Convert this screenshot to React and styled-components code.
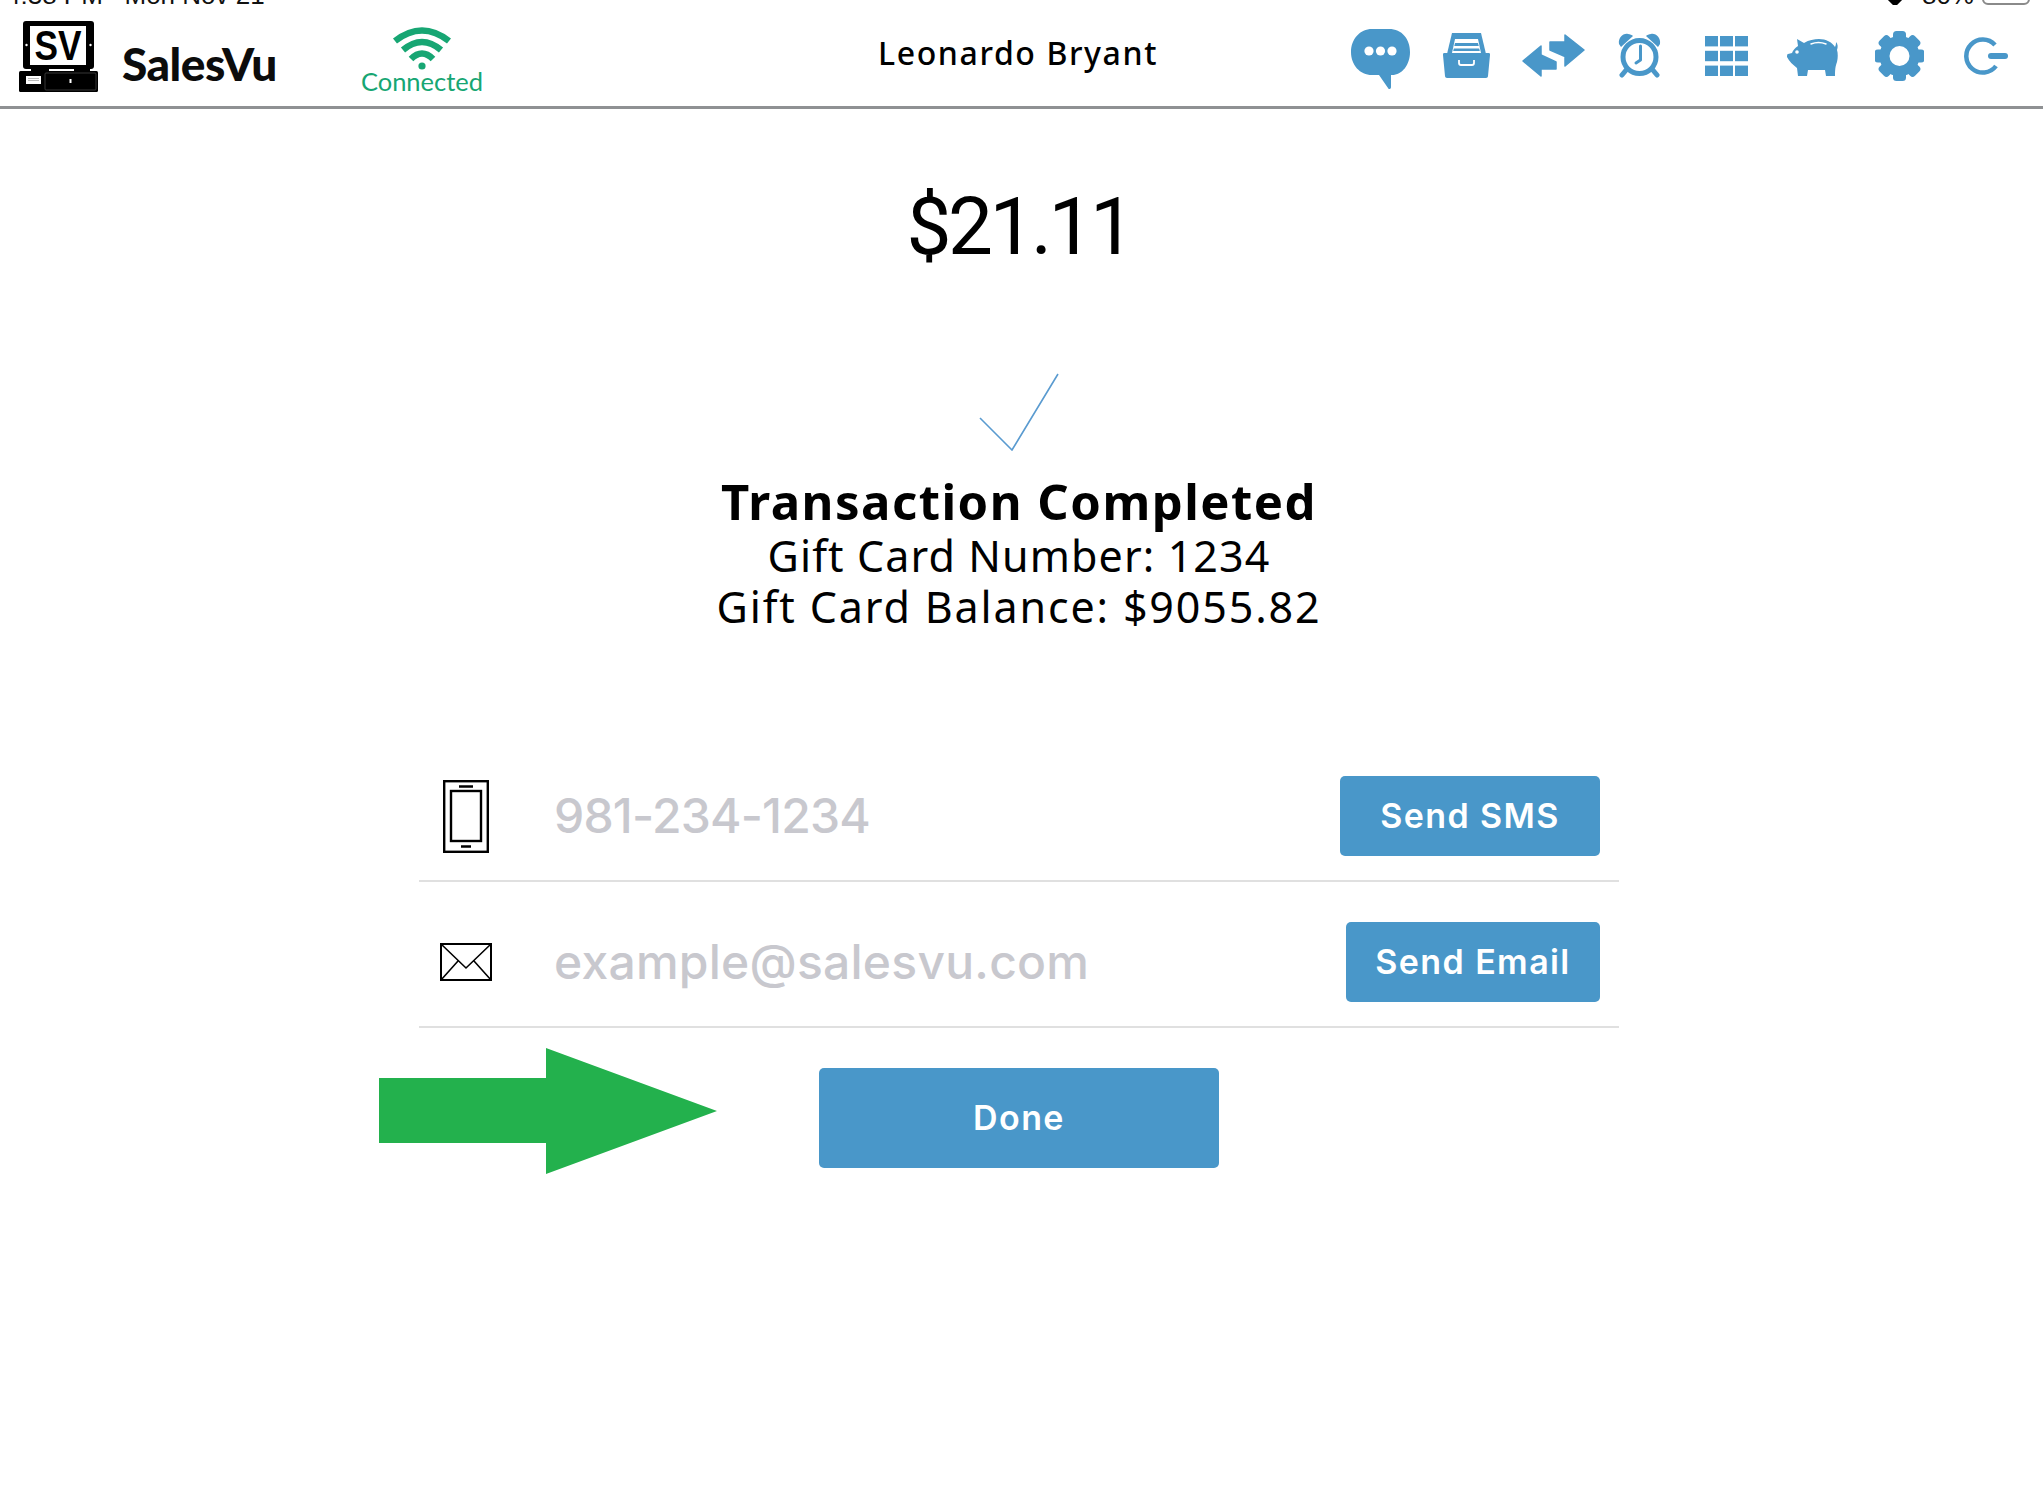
import React from "react";
import styled, { createGlobalStyle } from "styled-components";

const Global = createGlobalStyle`
  html, body { margin: 0; padding: 0; background: #fff; }
  * { box-sizing: border-box; }
  body { font-family: "Noto Sans", "Liberation Sans", sans-serif; color: #000; overflow: hidden; }
`;
const BLUE = "#4997c9";

const Page = styled.div`
  width: 2043px;
  min-height: 1511px;
  display: flex;
  flex-direction: column;
`;
const StatusBar = styled.div`
  height: 5px;
  overflow: hidden;
  display: flex;
  justify-content: space-between;
  padding: 0 13px 0 6px;
  font: 400 26px/28px "Liberation Sans", sans-serif;
  color: #111;
`;
const StatusText = styled.span`
  margin-top: -19px;
  white-space: pre;
`;
const StatusRight = styled.div`
  display: flex;
  align-items: flex-start;
  gap: 8px;
`;
const Battery = styled.div`
  width: 48px;
  height: 24px;
  margin-top: -19px;
  border: 2px solid #8a8a8a;
  border-radius: 6px;
  padding: 3px;
`;
const BatteryFill = styled.div`
  width: 12px;
  height: 100%;
  background: #000;
`;
const LocationDot = styled.span`
  width: 10px;
  height: 10px;
  margin: -5px 14px 0 0;
  background: #000;
  transform: rotate(45deg);
`;
const Header = styled.header`
  height: 104px;
  border-bottom: 3px solid #8f9193;
  display: grid;
  grid-template-columns: 1fr auto 1fr;
  align-items: center;
  padding-right: 14px;
`;
const Brand = styled.div`
  display: flex;
  align-items: center;
  padding-left: 19px;
`;
const BrandName = styled.span`
  font: 900 46px/50px "Lato", sans-serif;
  letter-spacing: -0.5px;
  margin: 16px 0 0 24px;
  color: #0c0c0c;
`;
const Connection = styled.div`
  display: flex;
  flex-direction: column;
  align-items: center;
  margin: 10px 0 0 84px;
`;
const ConnectedLabel = styled.span`
  font: 400 25.5px/26px "Lato", sans-serif;
  color: #17a673;
  margin-top: -2px;
`;
const UserName = styled.div`
  font: 500 32px/40px "Noto Sans", sans-serif;
  letter-spacing: 1.6px;
  margin: 0 0 6px 7px;
`;
const Nav = styled.nav`
  display: flex;
  justify-content: flex-end;
`;
const NavSlot = styled.div`
  width: 86.5px;
  height: 90px;
  display: flex;
  align-items: center;
  justify-content: center;
`;
const Main = styled.main`
  width: 2038px;
  display: flex;
  flex-direction: column;
  align-items: center;
`;
const Amount = styled.div`
  margin-top: 73px;
  font: 400 80px/90px "Roboto", sans-serif;
  letter-spacing: -3.5px;
`;
const CheckMark = styled.svg`
  display: block;
  margin-top: 101px;
  width: 80px;
  height: 78px;
`;
const Title = styled.h1`
  margin: 22px 0 0;
  font: 700 49px/57px "Noto Sans", sans-serif;
  letter-spacing: 1.5px;
`;
const InfoLine = styled.div`
  font: 400 43px/51px "Noto Sans", sans-serif;
  letter-spacing: ${(p) => p.$track}px;
`;
const Form = styled.div`
  width: 1200px;
  margin-top: 104px;
`;
const Row = styled.div`
  display: flex;
  align-items: center;
  height: 146px;
  padding: 40px 19px 24px 0;
  border-bottom: 2px solid #e0e0e0;
`;
const RowIcon = styled.div`
  width: 94px;
  margin-right: 41px;
  display: flex;
  justify-content: center;
`;
const FieldText = styled.span`
  flex: 1;
  font: 500 48px/56px "Inter", sans-serif;
  letter-spacing: ${(p) => p.$track}px;
  color: #c8c8ce;
`;
const ActionButton = styled.button`
  width: ${(p) => p.$w}px;
  height: 80px;
  border: 0;
  border-radius: 5px;
  background: ${BLUE};
  color: #fff;
  font: 600 34px/40px "Inter", sans-serif;
  letter-spacing: 1.4px;
  padding: 0;
`;
const DoneRow = styled.div`
  position: relative;
  width: 1200px;
  margin-top: 40px;
  display: flex;
  justify-content: center;
`;
const DoneButton = styled(ActionButton)`
  width: 400px;
  height: 100px;
`;
const PointerArrow = styled.svg`
  position: absolute;
  left: -40px;
  top: -20px;
`;

const Logo = () => (
  <svg width="79" height="72" viewBox="0 0 79 72">
    <rect x="4" y="1" width="71" height="48" rx="3" fill="#000" />
    <rect x="11" y="6" width="56" height="39" fill="#fff" />
    <circle cx="7.5" cy="25" r="1.2" fill="#fff" />
    <circle cx="71.5" cy="25" r="1.2" fill="#fff" />
    <text x="39" y="40" textAnchor="middle" textLength="47" lengthAdjust="spacingAndGlyphs" fontFamily="Liberation Sans" fontWeight="700" fontSize="42" fill="#000">SV</text>
    <rect x="12" y="48" width="18" height="4" fill="#000" />
    <rect x="55" y="48" width="16" height="4" fill="#000" />
    <rect x="0" y="51" width="79" height="21" rx="1.5" fill="#000" />
    <rect x="26" y="53" width="51" height="17" rx="1" fill="none" stroke="#444" strokeWidth="0.8" />
    <rect x="7" y="56" width="15" height="8" fill="#fff" />
    <path d="M9 58.5h11M9 60.5h11" stroke="#aaa" strokeWidth="0.8" />
    <rect x="50.5" y="59" width="2" height="4" fill="#fff" />
  </svg>
);
const Wifi = () => (
  <svg width="60" height="43" viewBox="0 0 60 43" fill="none" stroke="#17a673" strokeWidth="6.5">
    <path d="M3 14 Q30 -7 57 14" />
    <path d="M11 23 Q30 7 49 23" />
    <path d="M19 32 Q30 21 41 32" />
    <circle cx="30" cy="39" r="3.6" fill="#17a673" stroke="none" />
  </svg>
);
const ChatIcon = () => (
  <svg width="59" height="66" viewBox="0 -6 59 66">
    <path d="M21 0h17c13 0 21 10 21 23s-8 23-18 23h-1v12c0 2-2 3-3 1l-9-13H21C9 46 0 36 0 23S9 0 21 0z" fill={BLUE} />
    <circle cx="18" cy="22" r="4.6" fill="#fff" />
    <circle cx="29.5" cy="22" r="4.6" fill="#fff" />
    <circle cx="41" cy="22" r="4.6" fill="#fff" />
  </svg>
);
const DrawerIcon = () => (
  <svg width="47" height="45" viewBox="0 0 47 45">
    <path d="M9 0h29l5 21H4z" fill={BLUE} />
    <path d="M12 6h23l3 14H9z" fill="#fff" />
    <path d="M12 10h23l.8 3H11.3zM10.8 15.5h25.4l.6 2.5H10.2z" fill={BLUE} />
    <path d="M1 20h45c1 0 1 1 1 2l-2 21c0 1-1 2-2 2H4c-1 0-2-1-2-2L0 22c0-1 0-2 1-2z" fill={BLUE} />
    <path d="M16 27v3c0 1 1 2 2 2h11c1 0 2-1 2-2v-3" fill="none" stroke="#fff" strokeWidth="1.8" />
  </svg>
);
const SwapIcon = () => (
  <svg width="63" height="43" viewBox="0 0 63 43" fill={BLUE} stroke={BLUE} strokeWidth="1.5" strokeLinejoin="round">
    <path d="M28 8h15V1l19 15-19 16v-9.5L28 16z" />
    <path d="M1 27l18-15v9l15 7v7H19v7z" />
  </svg>
);
const ClockIcon = () => (
  <svg width="43" height="45" viewBox="0 0 43 45" fill="none">
    <path d="M1 11C0 5 5 0 10 1c2 0 4 1 5 2L3 14z" fill={BLUE} />
    <path d="M42 11c1-6-4-11-9-10-2 0-4 1-5 2l12 11z" fill={BLUE} />
    <circle cx="21.5" cy="24" r="16.5" stroke={BLUE} strokeWidth="5" />
    <path d="M22.5 13v14l-4.500 3" stroke={BLUE} strokeWidth="3" strokeLinecap="round" strokeLinejoin="round" />
    <path d="M9 36l-5 6M34 36l5 6" stroke={BLUE} strokeWidth="5" strokeLinecap="round" />
  </svg>
);
const GridIcon = () => (
  <svg width="43" height="40" viewBox="0 0 43 40" fill={BLUE}>
    {[0, 14.8, 29.6].flatMap((y) =>
      [0, 15, 30].map((x) => <rect key={`${x}-${y}`} x={x} y={y} width="13" height="10.400" />)
    )}
  </svg>
);
const PiggyIcon = () => (
  <svg width="52" height="40" viewBox="0 0 52 40">
    <path d="M10 3l7 4c5-3 10-4 15-4 7 0 13 3 16 8 1-2 1-4 1-5 2 2 2 5 1 8 1 3 1 8 0 12-1 3-2 5-2 14h-9l-1-6H21l-1 6h-9l-1-8C6 29 2 25 0 21c0-1 0-3 1-3l4-1c1-3 3-5 6-7z" fill={BLUE} />
    <circle cx="10" cy="16" r="1.800" fill="#fff" />
    <path d="M24 8c5-2 10-2 15 0" stroke="#fff" strokeWidth="1.400" fill="none" strokeLinecap="round" />
  </svg>
);
const GearIcon = () => (
  <svg width="49" height="50" viewBox="0 0 49 50">
    {[0, 45, 90, 135, 180, 225, 270, 315].map((a) => (
      <rect key={a} x="18" y="0" width="13" height="14" rx="3.500" fill={BLUE} transform={`rotate(${a} 24.5 25)`} />
    ))}
    <circle cx="24.500" cy="25" r="15" fill="none" stroke={BLUE} strokeWidth="10" />
  </svg>
);
const PowerIcon = () => (
  <svg width="44" height="38" viewBox="0 0 44 38" fill="none" stroke={BLUE}>
    <path d="M31 8A16.500 16.500 0 1 0 32 29" strokeWidth="4.500" />
    <path d="M27 19h14" strokeWidth="6" strokeLinecap="round" />
  </svg>
);
const PhoneIcon = () => (
  <svg width="46" height="73" viewBox="0 0 46 73" fill="none" stroke="#000">
    <rect x="1.200" y="1.200" width="43.600" height="70.600" strokeWidth="2.400" />
    <rect x="8" y="11" width="30" height="50" strokeWidth="2.400" />
    <path d="M16 6.500h14M18 66.500h10" strokeWidth="2.400" />
  </svg>
);
const MailIcon = () => (
  <svg width="52" height="38" viewBox="0 0 52 38" fill="none" stroke="#000" strokeWidth="1.600">
    <rect x="1" y="1" width="50" height="36" strokeWidth="2" />
    <path d="M1 1l25 24L51 1M1 37l17-19M51 37L34 18" />
  </svg>
);

const navIcons = [ChatIcon, DrawerIcon, SwapIcon, ClockIcon, GridIcon, PiggyIcon, GearIcon, PowerIcon];

export default function App() {
  return (
    <Page>
      <Global />
      <StatusBar>
        <StatusText>4:38 PM   Mon Nov 21</StatusText>
        <StatusRight>
          <LocationDot />
          <StatusText>80%</StatusText>
          <Battery><BatteryFill /></Battery>
        </StatusRight>
      </StatusBar>
      <Header>
        <Brand>
          <Logo />
          <BrandName>SalesVu</BrandName>
          <Connection>
            <Wifi />
            <ConnectedLabel>Connected</ConnectedLabel>
          </Connection>
        </Brand>
        <UserName>Leonardo Bryant</UserName>
        <Nav>
          {navIcons.map((Icon, i) => (
            <NavSlot key={i}><Icon /></NavSlot>
          ))}
        </Nav>
      </Header>
      <Main>
        <Amount>$21.11</Amount>
        <CheckMark viewBox="0 0 80 78" fill="none" stroke="#5a9bd0" strokeWidth="1.600">
          <path d="M1 45l32 32L79 1" />
        </CheckMark>
        <Title>Transaction Completed</Title>
        <InfoLine $track={1.1}>Gift Card Number: 1234</InfoLine>
        <InfoLine $track={1.85}>Gift Card Balance: $9055.82</InfoLine>
        <Form>
          <Row>
            <RowIcon><PhoneIcon /></RowIcon>
            <FieldText $track={-0.8}>981-234-1234</FieldText>
            <ActionButton $w={260}>Send SMS</ActionButton>
          </Row>
          <Row>
            <RowIcon><MailIcon /></RowIcon>
            <FieldText $track={0.25}>example@salesvu.com</FieldText>
            <ActionButton $w={254}>Send Email</ActionButton>
          </Row>
        </Form>
        <DoneRow>
          <PointerArrow width="339" height="126" viewBox="0 0 339 126">
            <path d="M0 30h167V0l171 63-171 63V95H0z" fill="#23b14d" />
          </PointerArrow>
          <DoneButton>Done</DoneButton>
        </DoneRow>
      </Main>
    </Page>
  );
}
